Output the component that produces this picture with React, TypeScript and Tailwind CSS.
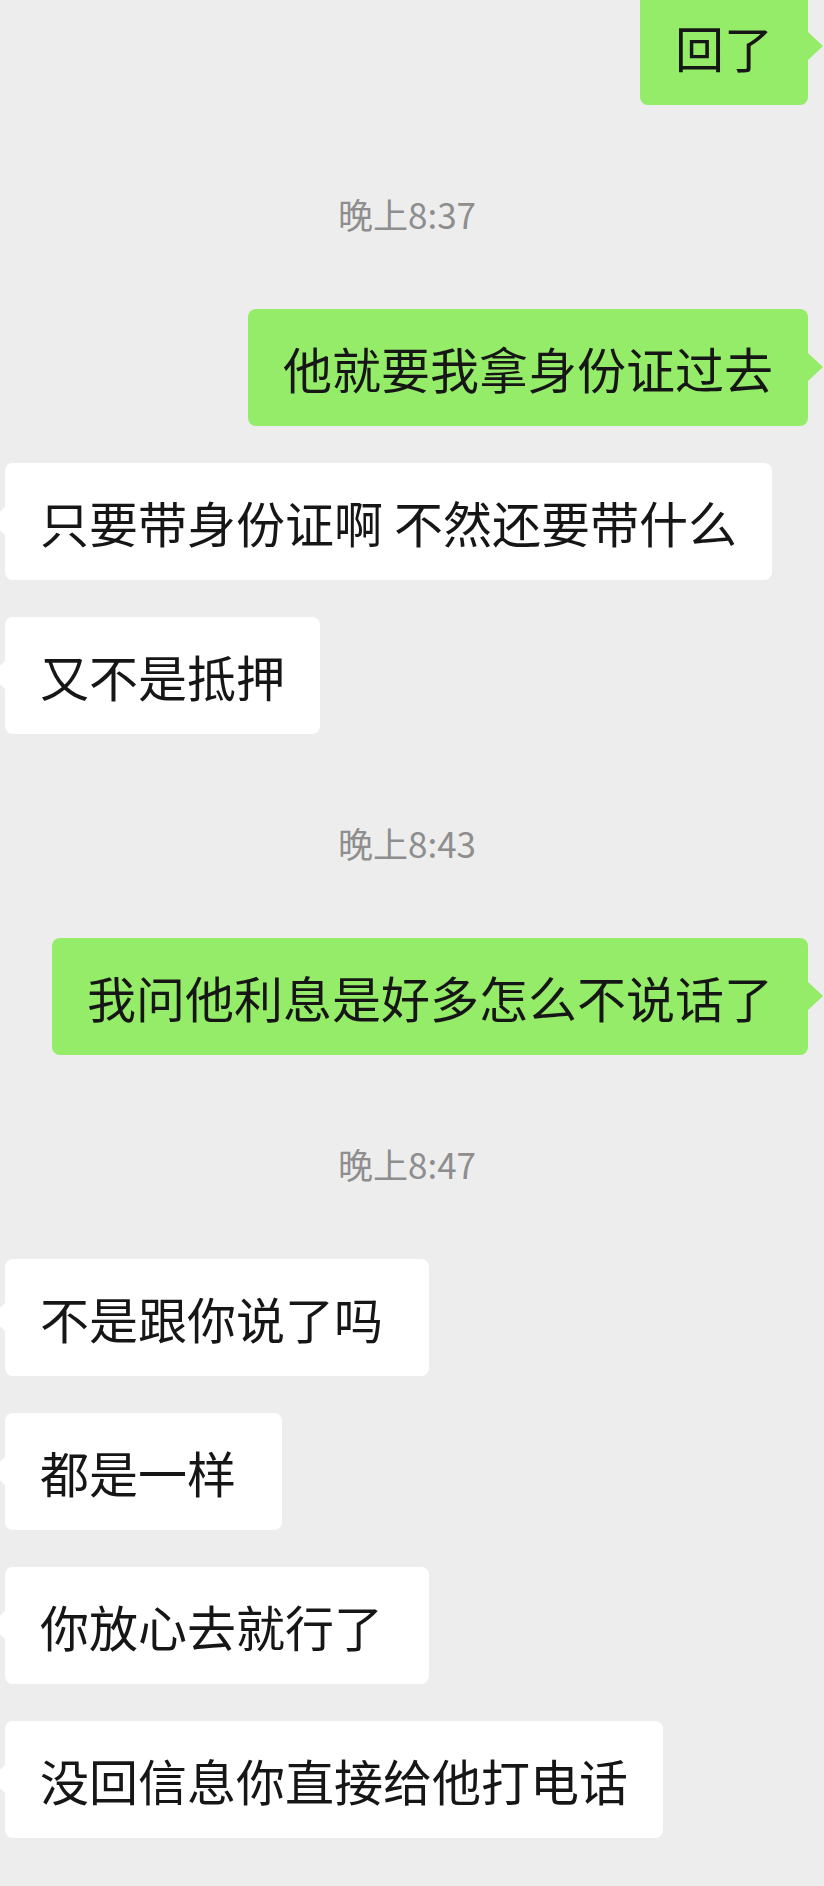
import React from "react";

type Item =
  | { kind: "time"; text: string }
  | { kind: "me"; text: string }
  | { kind: "other"; text: string };

const items: Item[] = [
  { kind: "me", text: "回了" },
  { kind: "time", text: "晚上8:37" },
  { kind: "me", text: "他就要我拿身份证过去" },
  { kind: "other", text: "只要带身份证啊 不然还要带什么" },
  { kind: "other", text: "又不是抵押" },
  { kind: "time", text: "晚上8:43" },
  { kind: "me", text: "我问他利息是好多怎么不说话了" },
  { kind: "time", text: "晚上8:47" },
  { kind: "other", text: "不是跟你说了吗 " },
  { kind: "other", text: "都是一样 " },
  { kind: "other", text: "你放心去就行了 " },
  { kind: "other", text: "没回信息你直接给他打电话" },
];

const font = {
  fontFamily: '"Noto Sans CJK SC", "Noto Sans", sans-serif',
};

function Bubble({ item, first, afterTime }: { item: Item; first: boolean; afterTime: boolean }) {
  const mine = item.kind === "me";
  const margin = first ? "mt-[-12px]" : afterTime ? "mt-0" : "mt-[37px]";
  return (
    <div className={`flex w-full ${mine ? "justify-end pr-[16px]" : "justify-start pl-[5px]"} ${margin}`}>
      <div
        className={`relative flex h-[117px] items-center rounded-[8px] px-[35px] text-[49px] leading-none text-[#161616] whitespace-pre ${
          mine ? "bg-[#95ec69]" : "bg-white"
        }`}
      >
        {item.text}
        {mine ? (
          <span className="absolute right-[-15px] top-[44px] h-0 w-0 border-y-[14px] border-l-[15px] border-y-transparent border-l-[#95ec69]" />
        ) : (
          <span className="absolute left-[-15px] top-[44px] h-0 w-0 border-y-[14px] border-r-[15px] border-y-transparent border-r-white" />
        )}
      </div>
    </div>
  );
}

export default function App() {
  return (
    <div className="h-[1886px] w-[824px] overflow-hidden bg-[#ededed]" style={font}>
      <div className="flex flex-col">
        {items.map((it, i) => {
          if (it.kind === "time") {
            return (
              <div
                key={i}
                className="mt-[89px] mb-[75px] h-[40px] pr-[10px] text-center text-[35px] leading-[40px] text-[#8e8e8e]"
              >
                {it.text}
              </div>
            );
          }
          const prev = items[i - 1];
          return (
            <Bubble
              key={i}
              item={it}
              first={i === 0}
              afterTime={!!prev && prev.kind === "time"}
            />
          );
        })}
      </div>
    </div>
  );
}
